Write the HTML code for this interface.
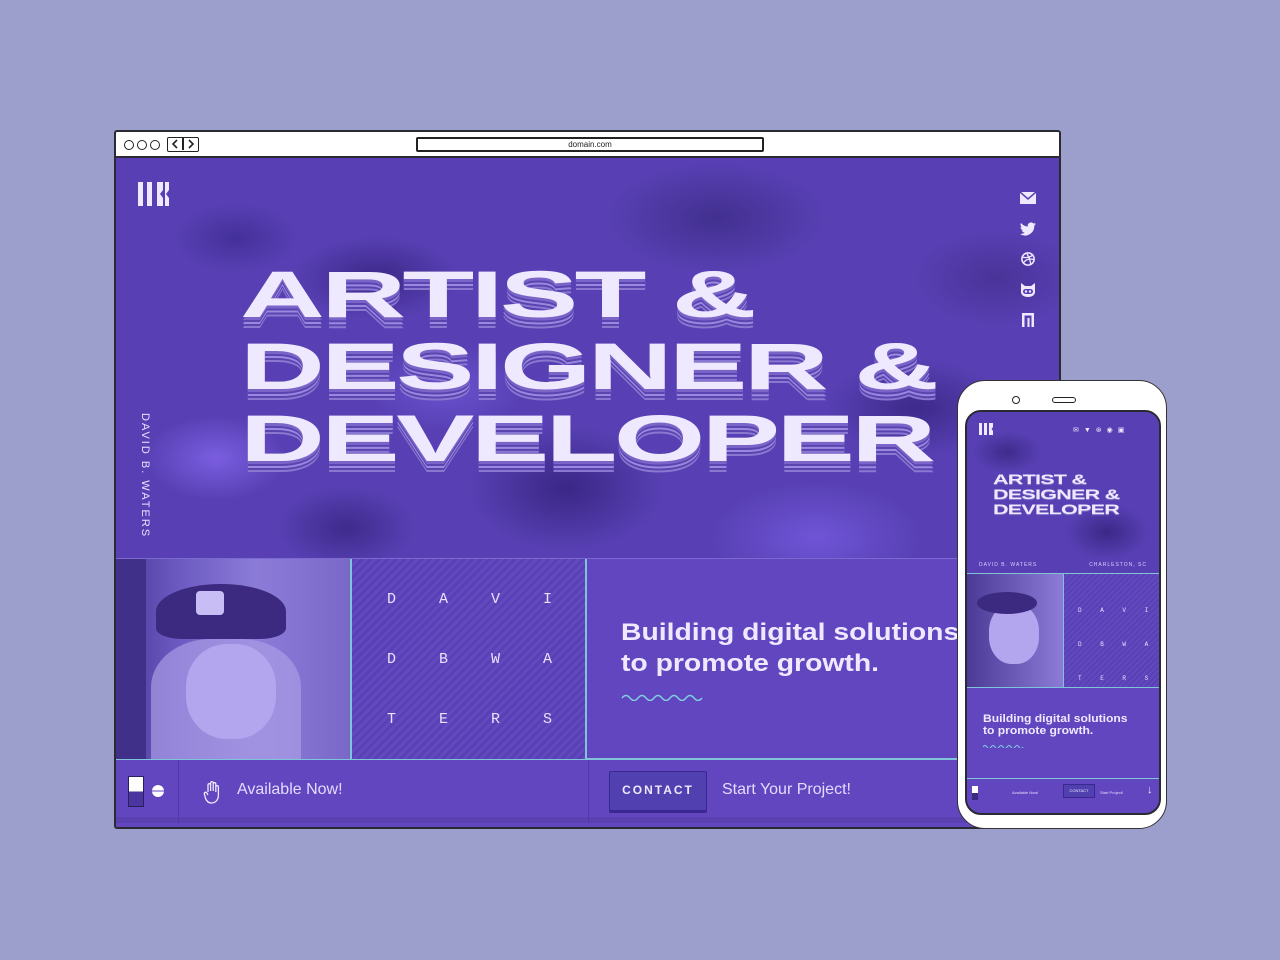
<!DOCTYPE html>
<html><head><meta charset="utf-8"><style>
*{margin:0;padding:0;box-sizing:border-box}
body{width:1280px;height:960px;background:#9c9ecb;position:relative;overflow:hidden;font-family:"Liberation Sans",sans-serif}
.win{position:absolute;left:114px;top:130px;width:947px;height:699px;border:2px solid #2a2a33;border-radius:3px;background:#6246c0;overflow:hidden}
.bar{position:absolute;left:0;top:0;width:100%;height:26px;background:#fff;border-bottom:2px solid #2a2a33}
.dot{position:absolute;top:8px;width:10px;height:10px;border:1.6px solid #222;border-radius:50%}
.nav{position:absolute;left:51px;top:5px;width:32px;height:15px;border:1.6px solid #222;border-radius:2px}
.url{position:absolute;left:300px;top:5px;width:348px;height:15px;border:2px solid #222;border-radius:2px;font-size:8px;text-align:center;line-height:11px;color:#222}
.hero{position:absolute;left:0;top:26px;width:100%;height:400px;background:
radial-gradient(ellipse 120px 60px at 260px 120px,#3c2888 0,transparent 70%),
radial-gradient(ellipse 160px 80px at 600px 60px,#42308f 0,transparent 70%),
radial-gradient(ellipse 140px 90px at 450px 330px,#3a2785 0,transparent 70%),
radial-gradient(ellipse 130px 70px at 800px 250px,#3d2a8a 0,transparent 70%),
radial-gradient(ellipse 100px 60px at 100px 300px,#7a5ee0 0,transparent 70%),
radial-gradient(ellipse 150px 80px at 700px 380px,#6f55d6 0,transparent 70%),
radial-gradient(ellipse 120px 70px at 880px 120px,#4a3398 0,transparent 70%),
radial-gradient(ellipse 90px 50px at 120px 80px,#44309a 0,transparent 70%),
radial-gradient(ellipse 110px 60px at 330px 230px,#6a52d0 0,transparent 70%),
radial-gradient(ellipse 100px 60px at 230px 370px,#3e2b8c 0,transparent 70%),
#5840b4}
.h1{position:absolute;left:124px;top:100px;color:#efe9ff;font-weight:bold;font-size:66px;line-height:72px;transform:scaleX(1.78);transform-origin:0 0;white-space:nowrap;letter-spacing:-2px;
text-shadow:0 3px 0 #7a64c8,0 5px 0 #5a44b0,0 7px 0 #9a88e0,0 9px 0 #5a44b0,0 11px 0 #8a78d0}
.vert{position:absolute;top:255px;color:#e8e2ff;font-size:11px;letter-spacing:2px;transform:rotate(90deg);transform-origin:0 0;white-space:nowrap;left:35px}
.soc{position:absolute;left:904px;width:16px;height:14px}
.grid{position:absolute;top:426px;left:0;width:100%;height:202px;border-top:1px solid #7c6ad0;border-bottom:2px solid #7fc4d8}
.photo{position:absolute;left:0;top:0;width:234px;height:200px;background:linear-gradient(90deg,#4b3a96 0,#6a58c0 25%,#8c7cd8 60%,#7a68c8 100%)}
.letters{position:absolute;left:234px;top:0;width:237px;height:200px;border-left:2px solid #7fc4d8;border-right:2px solid #7fc4d8;background:repeating-linear-gradient(135deg,#5a40b6 0 3px,#6249bd 3px 6px)}
.letters span{position:absolute;font-family:"Liberation Mono",monospace;font-size:15px;color:#e8e2ff}
.tag{position:absolute;left:505px;top:58px;color:#efe9ff;font-weight:bold;font-size:24px;line-height:31px;transform:scaleX(1.18);transform-origin:0 0;white-space:nowrap}
.foot{position:absolute;top:628px;left:0;width:100%;height:63px;background:#6246c0;border-bottom:6px solid #5a40b0}
.phone{position:absolute;left:957px;top:380px;width:210px;height:449px;background:#fff;border:1.5px solid #333;border-radius:28px}
.screen{position:absolute;left:7px;top:29px;width:196px;height:405px;border:2px solid #2a2a33;border-radius:16px;overflow:hidden;background:#6246c0}
</style></head><body>
<div class="win">
 <div class="bar">
  <div class="dot" style="left:8px"></div><div class="dot" style="left:21px"></div><div class="dot" style="left:34px"></div>
  <div class="nav"><div style="position:absolute;left:14px;top:0;width:1.6px;height:12px;background:#222"></div>
   <svg width="30" height="12" style="position:absolute;left:0;top:0"><path d="M9 2 5 6 9 10M21 2 25 6 21 10" stroke="#222" stroke-width="1.6" fill="none"/></svg></div>
  <div class="url">domain.com</div>
 </div>
 <div class="hero">
  <svg style="position:absolute;left:22px;top:24px" width="32" height="24"><path d="M0 0h5v24H0zM9 0h5v24H9zM19 0h6v8l-3 4 3 4v8h-6z" fill="#efe9ff"/><path d="M27 0h4v8l-3 4 3 4v8h-4z" fill="#efe9ff"/></svg>
  <div class="h1">ARTIST &amp;<br>DESIGNER &amp;<br>DEVELOPER</div>
  <div class="vert">DAVID B. WATERS</div>
  <svg class="soc" style="top:33px" viewBox="0 0 16 14"><rect x="0" y="1" width="16" height="12" fill="#efe9ff"/><path d="M0 1 8 8 16 1" stroke="#5840b4" stroke-width="1.5" fill="none"/></svg>
  <svg class="soc" style="top:64px" viewBox="0 0 16 14"><path d="M16 2c-.6.3-1.2.4-1.9.5.7-.4 1.2-1 1.4-1.8-.6.4-1.3.6-2.1.8A3.3 3.3 0 0 0 7.8 4.5 9.3 9.3 0 0 1 1 1a3.3 3.3 0 0 0 1 4.4c-.5 0-1-.2-1.5-.4 0 1.6 1.1 2.9 2.6 3.2-.5.1-1 .2-1.5.1.4 1.3 1.6 2.3 3.1 2.3A6.6 6.6 0 0 1 0 12a9.3 9.3 0 0 0 14.3-8.3c.7-.5 1.2-1 1.7-1.7z" fill="#efe9ff"/></svg>
  <svg class="soc" style="top:94px" viewBox="0 0 16 16" height="16"><circle cx="8" cy="8" r="7" stroke="#efe9ff" stroke-width="1.8" fill="none"/><path d="M2 6c4 1 9 0 12-3M3 12c3-4 8-5 12-3M6 1c3 4 5 9 5 14" stroke="#efe9ff" stroke-width="1.5" fill="none"/></svg>
  <svg class="soc" style="top:125px" viewBox="0 0 16 14"><path d="M1 0l4 3h6l4-3v9c0 3-3 5-7 5S1 12 1 9z" fill="#efe9ff"/><rect x="3" y="6" width="10" height="5" rx="2.5" fill="#5840b4"/><circle cx="6" cy="8.5" r="1.2" fill="#efe9ff"/><circle cx="10" cy="8.5" r="1.2" fill="#efe9ff"/></svg>
  <svg class="soc" style="top:155px" viewBox="0 0 16 14"><rect x="2" y="0" width="12" height="14" fill="#efe9ff"/><rect x="4.5" y="2.5" width="7" height="11.5" fill="#5840b4"/><rect x="7.5" y="5" width="2" height="9" fill="#efe9ff"/></svg>
 </div>
 <div class="grid">
  <div class="photo">
   <div style="position:absolute;left:35px;top:80px;width:150px;height:120px;border-radius:40% 40% 0 0;background:#a99be6;opacity:.7"></div>
   <div style="position:absolute;left:70px;top:85px;width:90px;height:95px;border-radius:45%;background:#b3a6ee"></div>
   <div style="position:absolute;left:40px;top:25px;width:130px;height:55px;border-radius:50% 50% 20% 20%;background:#3b2a80"></div>
   <div style="position:absolute;left:80px;top:32px;width:28px;height:24px;border-radius:4px;background:#c8bdf5"></div>
   <div style="position:absolute;left:0;top:0;width:30px;height:200px;background:#40308a"></div>
  </div>
  <div class="letters">
   <span style="left:35px;top:32px">D</span><span style="left:87px;top:32px">A</span><span style="left:139px;top:32px">V</span><span style="left:191px;top:32px">I</span>
   <span style="left:35px;top:92px">D</span><span style="left:87px;top:92px">B</span><span style="left:139px;top:92px">W</span><span style="left:191px;top:92px">A</span>
   <span style="left:35px;top:152px">T</span><span style="left:87px;top:152px">E</span><span style="left:139px;top:152px">R</span><span style="left:191px;top:152px">S</span>
  </div>
  <div class="tag">Building digital solutions<br>to promote growth.</div>
  <svg style="position:absolute;left:505px;top:134px" width="82" height="8"><path d="M1 5q4-5 8 0t8 0 8 0 8 0 8 0 8 0 8 0 8 0 8 0 8 0" stroke="#7fd0e0" stroke-width="1.5" fill="none"/></svg>
 </div>
 <div class="foot">
  <div style="position:absolute;left:62px;top:0;width:1px;height:63px;background:#5038a8"></div>
  <div style="position:absolute;left:472px;top:0;width:1px;height:63px;background:#5038a8"></div>
  <div style="position:absolute;left:12px;top:16px;width:16px;height:31px;border:1.5px solid #2a2060;background:linear-gradient(#fff 50%,#4b36a0 50%)"></div>
  <div style="position:absolute;left:36px;top:25px;width:12px;height:12px;border-radius:50%;background:linear-gradient(#fff 45%,#6246c0 45%,#6246c0 55%,#fff 55%)"></div>
  <svg style="position:absolute;left:87px;top:20px" width="20" height="24" viewBox="0 0 20 24"><path d="M5 12V5a1.3 1.3 0 0 1 2.6 0v6M7.6 11V3a1.3 1.3 0 0 1 2.6 0v8M10.2 11V4a1.3 1.3 0 0 1 2.6 0v8M12.8 12V7a1.3 1.3 0 0 1 2.6 0v8c0 5-3 8-7 8-3 0-5-2-6-5l-1-4a1.3 1.3 0 0 1 2.4-1L5 15" stroke="#efe9ff" stroke-width="1.3" fill="none"/></svg>
  <div style="position:absolute;left:121px;top:21px;color:#e3dcff;font-size:16px">Available Now!</div>
  <div style="position:absolute;left:493px;top:11px;width:98px;height:40px;border:1.5px solid #3a2890;border-radius:2px;background:#5040b0;box-shadow:0 2px 0 #3a2890;color:#efe9ff;font-size:12px;letter-spacing:2px;text-align:center;line-height:37px;font-weight:bold">CONTACT</div>
  <div style="position:absolute;left:606px;top:21px;color:#e3dcff;font-size:16px">Start Your Project!</div>
 </div>
</div>
<div class="phone">
 <div style="position:absolute;left:54px;top:15px;width:8px;height:8px;border:1.5px solid #222;border-radius:50%"></div>
 <div style="position:absolute;left:94px;top:16px;width:24px;height:6px;border:1.5px solid #222;border-radius:3px"></div>
 <div class="screen">
  <div style="position:absolute;left:0;top:0;width:100%;height:162px;background:radial-gradient(ellipse 60px 40px at 140px 120px,#3c2888,transparent 70%),radial-gradient(ellipse 50px 30px at 40px 40px,#3f2b8c,transparent 70%),#5840b4;border-bottom:1px solid #7fc4d8"></div>
  <svg style="position:absolute;left:12px;top:11px" width="16" height="12"><path d="M0 0h3v12H0zM5 0h3v12H5zM10 0h4v4l-1.5 2 1.5 2v4h-4z" fill="#efe9ff"/></svg>
  <div style="position:absolute;left:106px;top:14px;color:#efe9ff;font-size:7px;letter-spacing:5px">✉▼⊛◉▣</div>
  <div style="position:absolute;left:26px;top:60px;color:#efe9ff;font-weight:bold;font-size:13.5px;line-height:15px;transform:scaleX(1.6);transform-origin:0 0;white-space:nowrap;letter-spacing:-.5px;text-shadow:0 1px 0 #8a78d0,0 2px 0 #5a44b0">ARTIST &amp;<br>DESIGNER &amp;<br>DEVELOPER</div>
  <div style="position:absolute;left:12px;top:150px;color:#d8d0ff;font-size:5px;letter-spacing:1px">DAVID B. WATERS</div>
  <div style="position:absolute;right:12px;top:150px;color:#d8d0ff;font-size:5px;letter-spacing:1px">CHARLESTON, SC</div>
  <div style="position:absolute;left:0;top:162px;width:96px;height:113px;background:linear-gradient(90deg,#4b3a96,#8c7cd8)"><div style="position:absolute;left:22px;top:30px;width:50px;height:60px;border-radius:45%;background:#b3a6ee"></div><div style="position:absolute;left:10px;top:18px;width:60px;height:22px;border-radius:50%;background:#3b2a80"></div></div>
  <div style="position:absolute;left:96px;top:162px;width:100px;height:113px;border-left:1px solid #7fc4d8;background:repeating-linear-gradient(135deg,#5a40b6 0 2px,#6249bd 2px 4px);font-family:'Liberation Mono',monospace;font-size:6px;color:#e8e2ff;word-spacing:15px;padding:20px 0 0 14px;line-height:34px">D A V I<br>D B W A<br>T E R S</div>
  <div style="position:absolute;left:0;top:275px;width:100%;height:1px;background:#7fc4d8"></div>
  <div style="position:absolute;left:16px;top:301px;color:#efe9ff;font-weight:bold;font-size:11px;line-height:12px;white-space:nowrap;transform:scaleX(1.1);transform-origin:0 0">Building digital solutions<br>to promote growth.</div>
  <svg style="position:absolute;left:16px;top:332px" width="42" height="4"><path d="M0 3q2-3 4 0t4 0 4 0 4 0 4 0 4 0 4 0 4 0 4 0 4 0" stroke="#7fd0e0" fill="none"/></svg>
  <div style="position:absolute;left:0;top:366px;width:100%;height:1px;background:#7fc4d8"></div>
  <div style="position:absolute;left:5px;top:374px;width:6px;height:14px;background:linear-gradient(#fff 50%,#3a2a80 50%)"></div>
  <div style="position:absolute;left:45px;top:378px;color:#e3dcff;font-size:4px">Available Now!</div>
  <div style="position:absolute;left:96px;top:372px;width:32px;height:14px;background:#5040b0;border:1px solid #3a2890;color:#efe9ff;font-size:4px;text-align:center;line-height:12px">CONTACT</div>
  <div style="position:absolute;left:133px;top:378px;color:#e3dcff;font-size:4px">Start Project!</div>
  <div style="position:absolute;left:180px;top:372px;color:#efe9ff;font-size:11px">↓</div>
 </div>
</div>
</body></html>
